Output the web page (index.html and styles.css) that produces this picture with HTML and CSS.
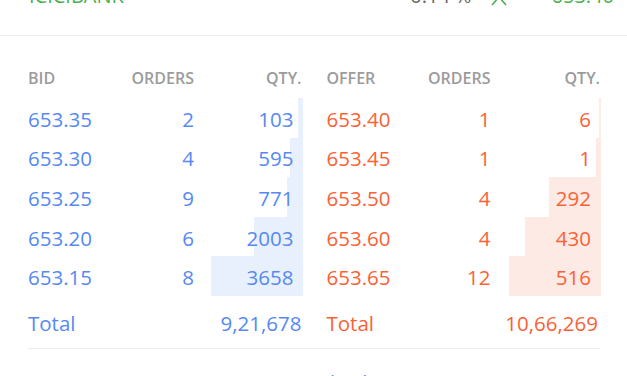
FILE: index.html
```html
<!DOCTYPE html>
<html>
<head>
<meta charset="utf-8">
<link rel="stylesheet" href="styles.css">
</head>
<body>
<div class="topbar">
  <span class="symbol">ICICIBANK</span>
  <span class="change">0.14 %</span>
  <svg class="chev" width="18" height="12" viewBox="0 0 18 12"><polyline points="2,11 9,3 16,11" fill="none" stroke="#4caf50" stroke-width="1.6"/></svg>
  <span class="ltp">653.40</span>
</div>
<div class="depth">
  <div class="book">
    <div class="side bids">
      <div class="row head"><span>BID</span><span class="r">ORDERS</span><span class="r">QTY.</span></div>
      <div class="row"><span>653.35</span><span class="r">2</span><span class="r q"><i class="bar" style="width:5px"></i><b>103</b></span></div>
      <div class="row"><span>653.30</span><span class="r">4</span><span class="r q"><i class="bar" style="width:13px"></i><b>595</b></span></div>
      <div class="row"><span>653.25</span><span class="r">9</span><span class="r q"><i class="bar" style="width:16px"></i><b>771</b></span></div>
      <div class="row"><span>653.20</span><span class="r">6</span><span class="r q"><i class="bar" style="width:49px"></i><b>2003</b></span></div>
      <div class="row"><span>653.15</span><span class="r">8</span><span class="r q"><i class="bar" style="width:92px"></i><b>3658</b></span></div>
      <div class="row total"><span>Total</span><span class="r wide">9,21,678</span></div>
    </div>
    <div class="side offers">
      <div class="row head"><span>OFFER</span><span class="r">ORDERS</span><span class="r">QTY.</span></div>
      <div class="row"><span>653.40</span><span class="r">1</span><span class="r q"><i class="bar" style="width:2px"></i><b>6</b></span></div>
      <div class="row"><span>653.45</span><span class="r">1</span><span class="r q"><i class="bar" style="width:5px"></i><b>1</b></span></div>
      <div class="row"><span>653.50</span><span class="r">4</span><span class="r q"><i class="bar" style="width:52px"></i><b>292</b></span></div>
      <div class="row"><span>653.60</span><span class="r">4</span><span class="r q"><i class="bar" style="width:76px"></i><b>430</b></span></div>
      <div class="row"><span>653.65</span><span class="r">12</span><span class="r q"><i class="bar" style="width:92px"></i><b>516</b></span></div>
      <div class="row total"><span>Total</span><span class="r wide">10,66,269</span></div>
    </div>
  </div>
  <div class="more">View 20 depth</div>
</div>
</body>
</html>
```
FILE: styles.css
```css
html, body {
  margin: 0;
  padding: 0;
  background: #fff;
  font-family: "Open Sans", "DejaVu Sans", sans-serif;
  overflow: hidden;
}

.topbar {
  display: flex;
  align-items: baseline;
  margin-top: -18px;
  height: 54px;
  box-sizing: border-box;
  padding: 0 13px 0 29px;
  border-bottom: 1px solid #eeeeee;
  font-size: 20px;
  line-height: 27px;
}
.symbol { flex: 1; color: #4caf50; }
.change { color: #666; }
.chev { margin-left: 18px; align-self: flex-start; margin-top: 12px; }
.ltp { margin-left: 44px; color: #4caf50; }

.depth {
  padding: 22px 27px 0 28px;
}
.book {
  display: flex;
  gap: 25px;
  border-bottom: 1px solid #eeeeee;
}
.side { flex: 1; }
.row {
  display: grid;
  grid-template-columns: 90px 76px 1fr;
  height: 39.6px;
  align-items: center;
  font-size: 20.5px;
  padding-top: 2px;
  box-sizing: border-box;
}
.bids .row { color: #5689f2; }
.offers .row { color: #fa6236; }
.row.head {
  height: 40px;
  font-size: 16px;
  font-weight: 600;
  color: #9b9b9b !important;
  padding-top: 0;
}
.offers .row > span:nth-child(2) { padding-right: 2px; }
.r { text-align: right; }
.q {
  position: relative;
  height: 39.6px;
  margin-top: -2px;
  display: flex;
  align-items: center;
  justify-content: flex-end;
  padding-top: 2px;
  box-sizing: border-box;
}
.q b { font-weight: 400; position: relative; padding-right: 8px; }
.offers .q b { padding-right: 9px; }
.bar {
  position: absolute;
  top: 0;
  bottom: 0;
  right: -1px;
}
.bids .bar { background: #e9f0fd; }
.offers .bar { background: #feeae4; }
.row.total { height: 52px; }
.wide { grid-column: 2 / 4; }

.more {
  text-align: center;
  margin-top: 22px;
  color: #5689f2;
  font-size: 18px;
  line-height: 22px;
}
```
